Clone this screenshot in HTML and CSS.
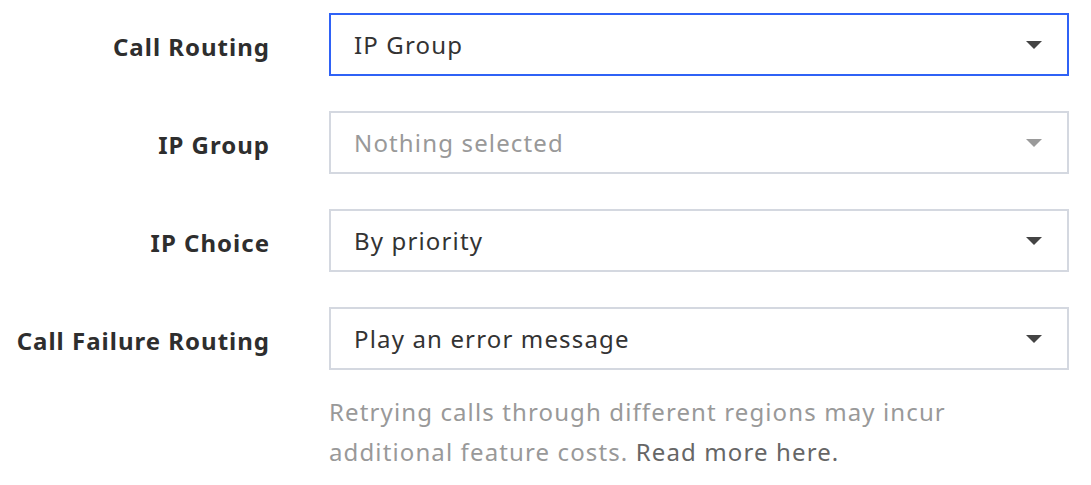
FILE: index.html
```html
<!DOCTYPE html>
<html>
<head>
<meta charset="utf-8">
<link rel="stylesheet" href="styles.css">
</head>
<body>
<form class="form">
  <div class="row">
    <label class="label">Call Routing</label>
    <div class="select select--focus">
      <span class="value">IP Group</span>
      <span class="caret"></span>
    </div>
  </div>
  <div class="row">
    <label class="label">IP Group</label>
    <div class="select">
      <span class="value value--placeholder">Nothing selected</span>
      <span class="caret caret--muted"></span>
    </div>
  </div>
  <div class="row">
    <label class="label">IP Choice</label>
    <div class="select">
      <span class="value">By priority</span>
      <span class="caret"></span>
    </div>
  </div>
  <div class="row">
    <label class="label">Call Failure Routing</label>
    <div class="field">
      <div class="select">
        <span class="value">Play an error message</span>
        <span class="caret"></span>
      </div>
      <p class="help">Retrying calls through different regions may incur<br>additional feature costs. <a class="help-link">Read more here.</a></p>
    </div>
  </div>
</form>
</body>
</html>
```

FILE: styles.css
```css
* { box-sizing: border-box; }
html, body { margin: 0; padding: 0; background: #fff; }
body {
  font-family: "Noto Sans", "Open Sans", sans-serif;
  color: #333;
}
.form {
  display: flex;
  flex-direction: column;
  gap: 35px;
  padding-top: 13px;
  width: 1069px;
}
.row {
  display: grid;
  grid-template-columns: 269px 740px;
  column-gap: 60px;
  align-items: start;
}
.label {
  text-align: right;
  font-weight: 700;
  font-size: 24px;
  letter-spacing: 1px;
  margin-right: -1px;
  height: 63px;
  padding-top: 4px;
  line-height: 59px;
  color: #2e2e2e;
  white-space: nowrap;
}
.select {
  height: 63px;
  border: 2px solid #d4d8e0;
  display: flex;
  align-items: center;
  justify-content: space-between;
  padding: 0 25px 0 23px;
  font-size: 24px;
  letter-spacing: 1.15px;
  color: #333;
}
.select--focus { border-color: #2f62f6; }
.value--placeholder { color: #999; }
.caret {
  width: 0; height: 0;
  border-left: 8px solid transparent;
  border-right: 8px solid transparent;
  border-top: 8px solid #444;
}
.caret--muted { border-top-color: #9a9a9a; }
.help {
  margin: 22px 0 0;
  font-size: 24px;
  letter-spacing: 1.12px;
  line-height: 40px;
  color: #999;
  width: 700px;
}
.help-link { color: #666; }
```
